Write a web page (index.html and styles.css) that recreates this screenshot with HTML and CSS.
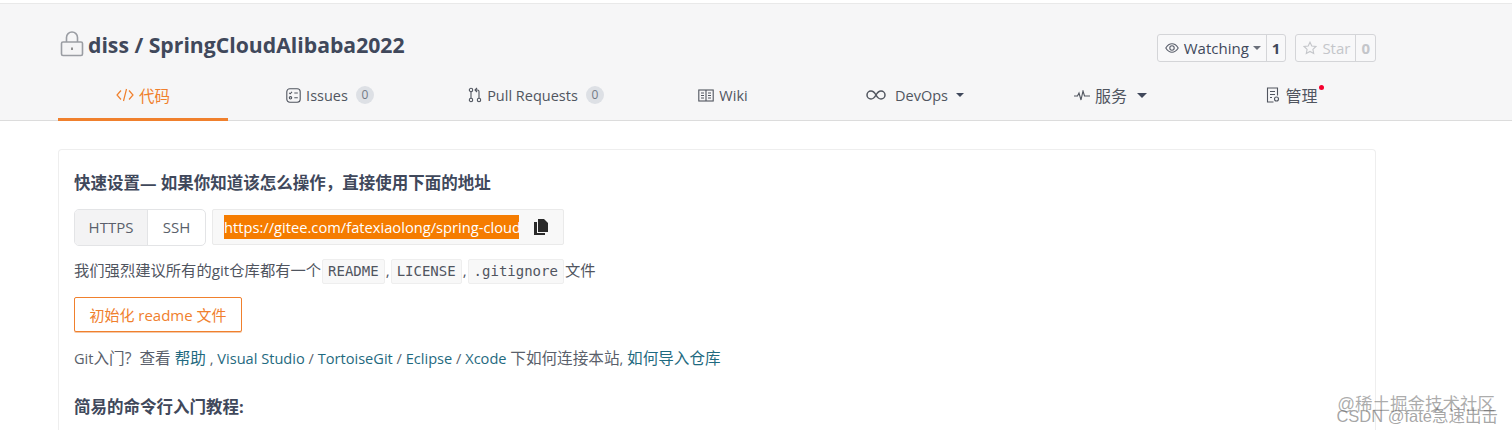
FILE: index.html
```html
<!DOCTYPE html>
<html lang="en">
<head>
  <meta charset="UTF-8">
  <meta name="viewport" content="width=device-width, initial-scale=1.0">
  <title>diss / SpringCloudAlibaba2022</title>
  <link rel="stylesheet" href="styles.css">
</head>
<body>
  <header class="repo-header">
    <div class="title-row">
      <h1 class="repo-title">
        <svg class="lock-icon" width="24" height="26" viewBox="0 0 24 26" fill="none" stroke="#9a9da3" stroke-width="1.6">
          <rect x="1.5" y="11" width="21" height="13.5" rx="1.5" fill="#f4f4f5"/>
          <path d="M6.5 11V6.5a5.5 5.5 0 0 1 11 0V11"/>
          <path d="M12 16.5v2.5" stroke="#777"/>
        </svg>
        diss / SpringCloudAlibaba2022
      </h1>
      <div class="repo-actions">
        <div class="btn-group">
          <span class="btn-main">
            <svg width="14" height="10" viewBox="0 0 14 10" fill="none" stroke="#5a5f6b" stroke-width="1.1"><path d="M.8 5C2.5 2.2 4.6.8 7 .8s4.5 1.4 6.2 4.2C11.5 7.800 9.400 9.200 7 9.200S2.500 7.800.8 5z"/><circle cx="7" cy="5" r="2.200"/></svg>
            Watching <i class="caret"></i>
          </span>
          <span class="btn-count">1</span>
        </div>
        <div class="btn-group is-disabled">
          <span class="btn-main">
            <svg width="14" height="14" viewBox="0 0 14 14" fill="none" stroke="#c4c6ca" stroke-width="1.1"><path d="M7 1.200l1.800 3.800 4.100.5-3 2.900.8 4.100L7 10.500l-3.700 2 .8-4.100-3-2.900 4.100-.5z"/></svg>
            Star
          </span>
          <span class="btn-count">0</span>
        </div>
      </div>
    </div>
    <nav class="tabs">
      <a class="tab active">
        <svg width="18" height="14" viewBox="0 0 18 14" fill="none" stroke="#f0802d" stroke-width="1.200"><path d="M5 2.500L1 7l4 4.500M13 2.500L17 7l-4 4.500M10.500 1L7.500 13"/></svg>
        代码
      </a>
      <a class="tab">
        <svg width="15" height="15" viewBox="0 0 15 15" fill="none" stroke="#50555f" stroke-width="1.100"><rect x=".8" y=".8" width="13.400" height="13.400" rx="3"/><path d="M3.200 4.800l1 1 1.800-1.900M8.300 5h3.500M8.300 9.800h3.500"/><circle cx="4.500" cy="9.800" r="1.200"/></svg>
        Issues <span class="badge">0</span>
      </a>
      <a class="tab">
        <svg width="14" height="16" viewBox="0 0 14 16" fill="none" stroke="#50555f" stroke-width="1.100"><circle cx="3" cy="3" r="1.700"/><circle cx="3" cy="13" r="1.700"/><circle cx="11" cy="13" r="1.700"/><path d="M3 4.700v6.600M11 11.300V4.500c0-1-.6-1.500-1.500-1.500H7.500M9 1L7 3l2 2"/></svg>
        Pull Requests <span class="badge">0</span>
      </a>
      <a class="tab">
        <svg width="16" height="13" viewBox="0 0 16 13" fill="none" stroke="#50555f" stroke-width="1.100"><rect x=".8" y="1" width="14.400" height="11"/><path d="M8 1v11M3 4h3M3 6.500h3M3 9h3M10 4h3M10 6.500h3M10 9h3"/></svg>
        Wiki
      </a>
      <a class="tab">
        <svg class="devops-icon" width="20" height="10" viewBox="0 0 20 10" fill="none" stroke="#50555f" stroke-width="1.500"><path d="M10 5C8.500 2.300 7 1 5 1a4 4 0 0 0 0 8c2 0 3.500-1.300 5-4s3-4 5-4a4 4 0 0 1 0 8c-2 0-3.500-1.300-5-4z"/></svg>
        DevOps<i class="caret dark"></i>
      </a>
      <a class="tab cjk">
        <svg width="16" height="11" viewBox="0 0 16 11" fill="none" stroke="#50555f" stroke-width="1.100"><path d="M0 6h3.500l1.500-3 2 7 2-9 1.500 5H16"/></svg>
        服务 <i class="caret dark wide"></i>
      </a>
      <a class="tab cjk">
        <svg width="14" height="16" viewBox="0 0 14 16" fill="none" stroke="#50555f" stroke-width="1.100"><path d="M7.500 15H1.500V1h10v7.500M4 4.500h5M4 7.500h5M4 10.500h2"/><circle cx="10.500" cy="12" r="2"/></svg>
        <span class="dot-wrap">管理<span class="red-dot"></span></span>
      </a>
    </nav>
  </header>

  <main class="content">
    <section class="card">
      <h3 class="card-title">快速设置— 如果你知道该怎么操作，直接使用下面的地址</h3>
      <div class="clone-row">
        <div class="proto-switch">
          <span class="proto active">HTTPS</span>
          <span class="proto">SSH</span>
        </div>
        <div class="url-box">
          <div class="url-text"><span class="url-selected">https://gitee.com/fatexiaolong/spring-cloud</span></div>
          <svg width="14" height="16" viewBox="0 0 14 16"><path fill="#2a2a2a" d="M4 0h6l4 4v9H4z"/><path fill="#2a2a2a" d="M0 3h3v11h8v2H0z"/></svg>
        </div>
      </div>
      <p class="hint">我们强烈建议所有的git仓库都有一个<code>README</code>,<code>LICENSE</code>,<code>.gitignore</code>文件</p>
      <button class="init-btn">初始化 readme 文件</button>
      <p class="help">Git<span class="zh">入门?  查看 </span><a class="zh">帮助</a> , <a>Visual Studio</a> / <a>TortoiseGit</a> / <a>Eclipse</a> / <a>Xcode</a> <span class="zh">下如何连接本站</span>, <a class="zh">如何导入仓库</a></p>
      <h3 class="card-title tutorial">简易的命令行入门教程:</h3>
    </section>
  </main>

  <!-- image watermarks -->
  <div class="mark mark-top">@稀土掘金技术社区</div>
  <div class="mark mark-bottom">CSDN @fate急速出击</div>
</body>
</html>
```

FILE: styles.css
```css
* {
  box-sizing: border-box;
}
html, body {
  height: 430px;
  overflow: hidden;
}
body {
  margin: 0;
  background-color: #fff;
  color: #40485b;
  font-family: 'Open Sans', 'Noto Sans CJK SC', sans-serif;
  font-size: 15px;
  position: relative;
}
.repo-header {
  height: 118px;
  margin-top: 3px;
  padding: 0 58px;
  background-color: #f6f6f7;
  border-top: 1px solid #e9e9e9;
  border-bottom: 1px solid #dcdcdc;
}
.title-row {
  display: flex;
  justify-content: space-between;
  height: 70px;
  padding-top: 25px;
}
.repo-title {
  display: flex;
  align-items: center;
  gap: 4px;
  height: 30px;
  margin: 0 0 0 2px;
  font-size: 21.2px;
  font-weight: 700;
  color: #40485b;
}
.lock-icon {
  flex: none;
}
.repo-actions {
  display: flex;
  gap: 9px;
  padding-top: 5px;
  margin-right: 78px;
}
.btn-group {
  display: flex;
  height: 28px;
  border: 1px solid #d4d5d8;
  border-radius: 3px;
  background-color: #f8f8f9;
  line-height: 26px;
}
.btn-main {
  display: flex;
  align-items: center;
  gap: 5px;
  padding: 0 5px 0 7px;
}
.btn-count {
  padding: 0 5px;
  border-left: 1px solid #d4d5d8;
  font-weight: 700;
}
.is-disabled {
  color: #c4c6ca;
}
.caret {
  display: inline-block;
  width: 0;
  height: 0;
  border-left: 4px solid transparent;
  border-right: 4px solid transparent;
  border-top: 4px solid #6a6f7a;
  margin-left: -1px;
}
.caret.dark {
  border-top-color: #40485b;
  margin-left: 3px;
}
.caret.wide {
  border-left-width: 5px;
  border-right-width: 5px;
  border-top-width: 5px;
  margin-left: 5px;
}
.tabs {
  display: grid;
  grid-template-columns: 170px 204px 208px 166px 218px 173px 190px;
}
.tab {
  display: flex;
  align-items: center;
  justify-content: center;
  gap: 5px;
  height: 47px;
  padding-bottom: 5px;
  color: #50555f;
  font-size: 14.5px;
}
.tab.cjk {
  font-size: 16px;
}
.tab.active {
  color: #f0802d;
  border-bottom: 3px solid #f0802d;
  padding-bottom: 2px;
  font-size: 15.5px;
}
.devops-icon {
  margin-right: 4px;
}
.badge {
  display: inline-block;
  min-width: 18px;
  height: 18px;
  margin-left: 3px;
  border-radius: 9px;
  background-color: #dde0e5;
  color: #737a85;
  font-size: 12px;
  line-height: 18px;
  text-align: center;
}
.dot-wrap {
  position: relative;
}
.red-dot {
  position: absolute;
  top: 2px;
  right: -6px;
  width: 5px;
  height: 5px;
  border-radius: 50%;
  background-color: #f5002e;
}
.content {
  padding: 28px 136px 0 58px;
}
.card {
  height: 281px;
  padding: 22px 15px 0;
  border: 1px solid #eeeeee;
  border-bottom: none;
  border-radius: 4px 4px 0 0;
}
.card-title {
  margin: 0;
  font-size: 16.500px;
  line-height: 22px;
  font-weight: 700;
  color: #40485b;
}
.clone-row {
  display: flex;
  gap: 6px;
  margin-top: 15px;
}
.proto-switch {
  display: flex;
  width: 132px;
  height: 37px;
  border: 1px solid #e3e4e6;
  border-radius: 5px;
  overflow: hidden;
  line-height: 35px;
  text-align: center;
}
.proto {
  flex: 1;
  color: #5a5f6b;
}
.proto.active {
  flex: none;
  width: 73px;
  background-color: #f3f3f4;
  border-right: 1px solid #e3e4e6;
}
.url-box {
  display: flex;
  align-items: center;
  gap: 15px;
  width: 352px;
  height: 36px;
  padding: 0 14px 0 11px;
  background-color: #f8f8f8;
  border: 1px solid #eaeaea;
  border-radius: 2px;
}
.url-text {
  width: 295px;
  overflow: hidden;
  white-space: nowrap;
}
.url-selected {
  background-color: #f57c00;
  color: #fff;
  display: inline-block;
  font-size: 14.700px;
  line-height: 24px;
}
.hint {
  margin: 12px 0 0;
  color: #50555f;
  font-size: 15.300px;
  line-height: 25px;
}
code {
  display: inline-block;
  margin: 0 1px;
  padding: 0 5px;
  background-color: #f8f8f8;
  border: 1px solid #eeeeee;
  border-radius: 2px;
  font-family: 'DejaVu Sans Mono', monospace;
  font-size: 14px;
  line-height: 23px;
  color: #50555f;
}
.init-btn {
  display: block;
  width: 168px;
  height: 35px;
  margin-top: 13px;
  padding: 0;
  background-color: #fff;
  border: 1px solid #f0802d;
  border-radius: 2px;
  box-shadow: 0 1px 0 #f6c9a8;
  color: #f0802d;
  font-family: inherit;
  font-size: 15px;
}
.help {
  margin: 15px 0 0;
  color: #5a5f6b;
  font-size: 14.600px;
  line-height: 22px;
  white-space: pre-wrap;
}
.help a {
  color: #1f6a80;
}
.help .zh {
  font-size: 15.600px;
}
.tutorial {
  margin-top: 27px;
}
.mark {
  position: absolute;
  color: rgba(90, 90, 90, 0.5);
  font-family: 'Liberation Sans', 'Noto Sans CJK SC', sans-serif;
  white-space: nowrap;
}
.mark-top {
  bottom: 15px;
  right: 17px;
  font-size: 17.500px;
}
.mark-bottom {
  bottom: 3px;
  right: 14px;
  font-size: 16.500px;
  color: rgba(90, 90, 90, 0.55);
}
```
